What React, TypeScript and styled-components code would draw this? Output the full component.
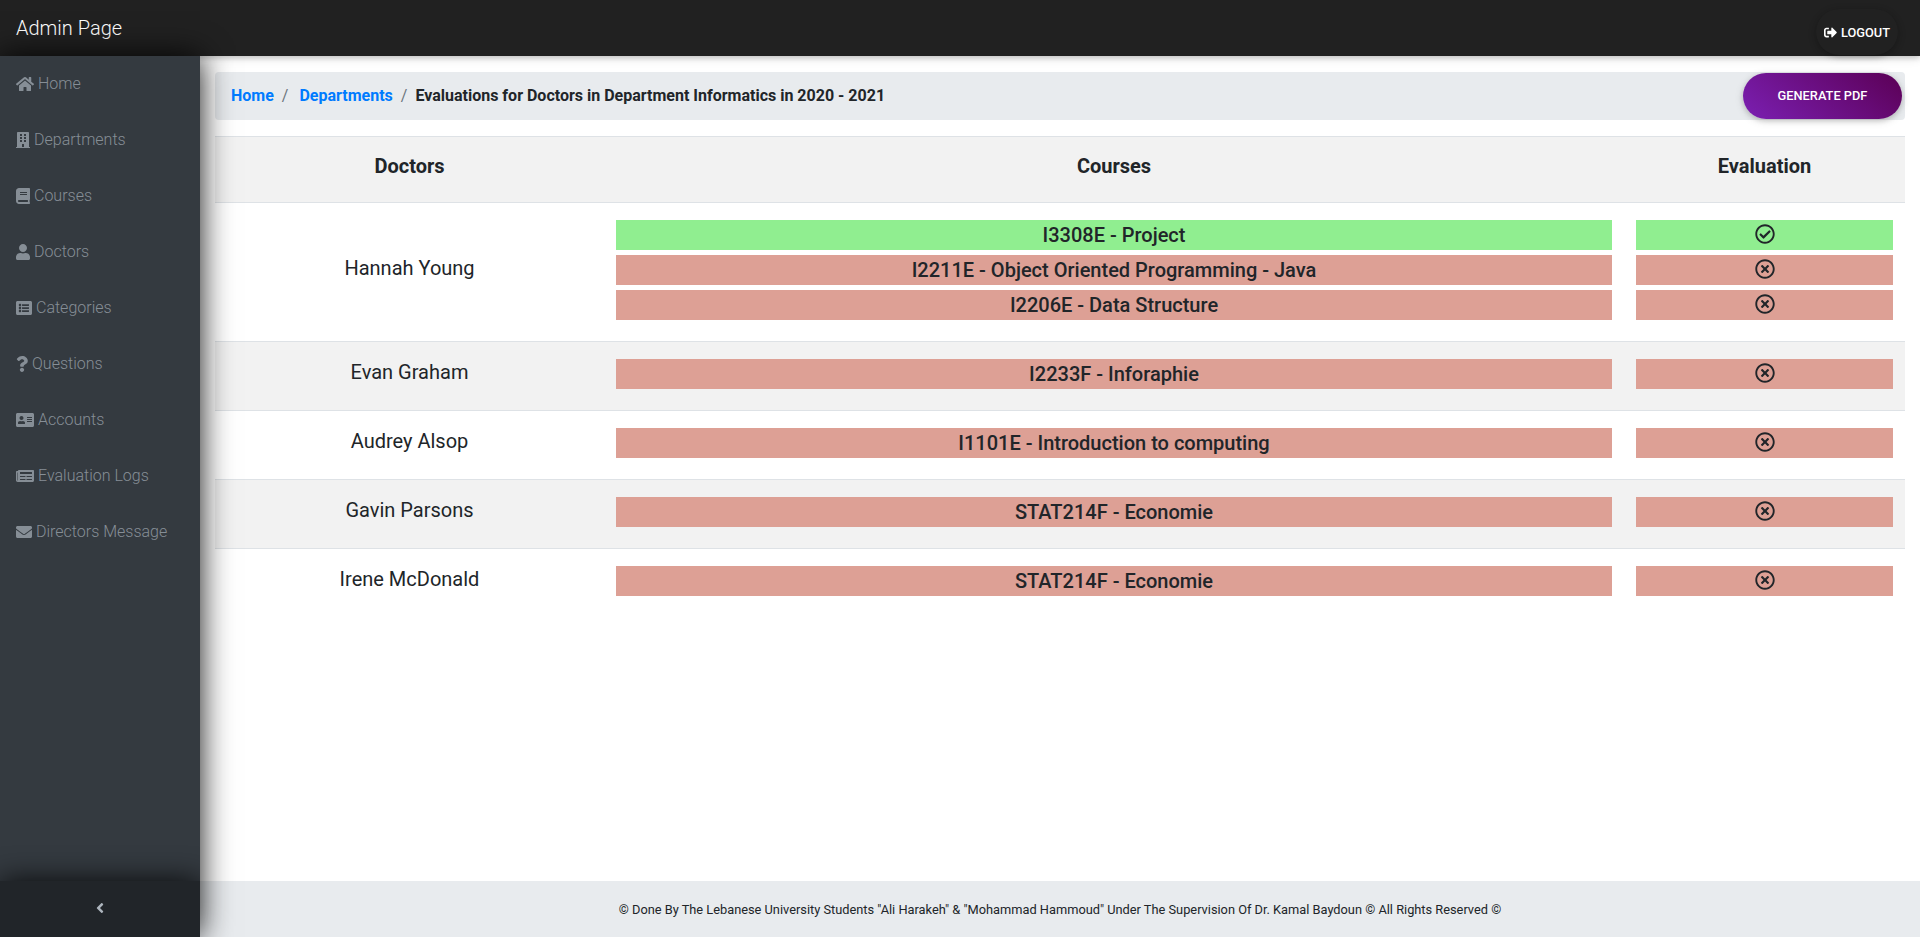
import React from "react";
import styled, { createGlobalStyle } from "styled-components";
import {
  FaHome,
  FaBuilding,
  FaBook,
  FaUser,
  FaListAlt,
  FaQuestion,
  FaAddressCard,
  FaNewspaper,
  FaEnvelope,
  FaAngleLeft,
  FaSignOutAlt,
  FaRegCheckCircle,
  FaRegTimesCircle,
} from "react-icons/fa";
import type { IconType } from "react-icons";

const GlobalStyle = createGlobalStyle`
  *, *::before, *::after { box-sizing: border-box; }
  body {
    margin: 0;
    background: #fff;
    color: #212529;
    font-family: Roboto, sans-serif;
    font-size: 16px;
    font-weight: 300;
    line-height: 1.5;
    overflow: hidden;
  }
`;

const Page = styled.div`
  display: grid;
  grid-template-columns: 200px 1fr;
  grid-template-rows: 56px 1fr 56px;
  height: 100vh;
`;

const TopBar = styled.header`
  grid-column: 1 / -1;
  z-index: 1;
  display: flex;
  justify-content: space-between;
  padding: 0 22px 0 16px;
  background: #212121;
  box-shadow: 0 2px 5px 0 rgba(0, 0, 0, 0.16), 0 2px 10px 0 rgba(0, 0, 0, 0.12);
`;

const Brand = styled.a`
  align-self: center;
  color: #fff;
  font-size: 20px;
`;

const Pill = styled.button`
  display: inline-flex;
  align-items: center;
  justify-content: center;
  padding: 0;
  border: 0;
  border-radius: 160px;
  color: #fff;
  font-family: inherit;
  font-size: 12.8px;
  font-weight: 500;
  line-height: 1.5;
  text-transform: uppercase;
  box-shadow: 0 2px 5px 0 rgba(0, 0, 0, 0.16), 0 2px 10px 0 rgba(0, 0, 0, 0.12);
`;

const LogoutButton = styled(Pill)`
  gap: 4px;
  width: 82px;
  height: 46px;
  margin-top: 9px;
  padding-top: 1px;
  background: #212121;
`;

const PdfButton = styled(Pill)`
  width: 159px;
  height: 46px;
  background: linear-gradient(40deg, #7b1fb2, #5b0055);
`;

const Sidebar = styled.aside`
  grid-row: 2 / 4;
  z-index: 2;
  display: flex;
  flex-direction: column;
  justify-content: space-between;
  overflow: hidden;
  background: #343a40;
  box-shadow: 0 0 30px rgba(0, 0, 0, 0.94);
`;

const Menu = styled.nav`
  display: flex;
  flex-direction: column;
`;

const MenuItem = styled.a`
  display: flex;
  align-items: center;
  gap: 4px;
  height: 56px;
  padding-left: 16px;
  color: #868e96;
`;

const MenuGlyph = styled.span<{ $width: number }>`
  display: inline-flex;
  padding-bottom: 1px;
  svg {
    width: ${(p) => p.$width}px;
    height: 16px;
  }
`;

const Collapse = styled.button`
  display: flex;
  align-items: center;
  justify-content: center;
  height: 56px;
  padding: 0 0 2px;
  border: 0;
  background: #212529;
  color: #adb5bd;
  box-shadow: 0 0 30px rgba(0, 0, 0, 0.85);
`;

const Main = styled.main`
  padding: 16px 15px;
`;

const Breadcrumb = styled.div`
  display: flex;
  align-items: center;
  justify-content: space-between;
  height: 48px;
  margin-bottom: 16px;
  padding: 0 3px 0 16px;
  border-radius: 4px;
  background: #e8ebee;
`;

const Trail = styled.div`
  display: flex;
  font-weight: 700;
`;

const Crumb = styled.a`
  color: #007bff;
`;

const Slash = styled.span<{ $after: number }>`
  padding: 0 ${(p) => p.$after}px 0 8px;
  color: #6c757d;
  font-weight: 400;
`;

const Table = styled.div`
  display: flex;
  flex-direction: column;
`;

const Row = styled.div<{ $striped?: boolean }>`
  display: grid;
  grid-template-columns: 389px 1020px 281px;
  border-top: 1px solid #dee2e6;
  background: ${(p) => (p.$striped ? "#f2f2f2" : "#fff")};
`;

const HeadCell = styled.div`
  padding: 17px 12px 24px;
  font-size: 20px;
  font-weight: 700;
  line-height: 24px;
  text-align: center;
`;

const NameCell = styled.div`
  align-self: center;
  padding-bottom: 8px;
  font-size: 20px;
  font-weight: 400;
  line-height: 24px;
  text-align: center;
`;

const Stack = styled.div`
  display: flex;
  flex-direction: column;
  gap: 5px;
  padding: 17px 12px 21px;
`;

const Bar = styled.div<{ $done: boolean }>`
  display: flex;
  align-items: center;
  justify-content: center;
  height: 30px;
  background: ${(p) => (p.$done ? "#90ee90" : "#dda095")};
  font-size: 20px;
  font-weight: 500;

  svg {
    margin-bottom: 2px;
  }
`;

const Footer = styled.footer`
  display: flex;
  align-items: center;
  justify-content: center;
  padding-top: 2px;
  background: #e8ebee;
  font-size: 12.8px;
  font-weight: 400;
`;

const menu: { icon: IconType; width: number; label: string }[] = [
  { icon: FaHome, width: 18, label: "Home" },
  { icon: FaBuilding, width: 14, label: "Departments" },
  { icon: FaBook, width: 14, label: "Courses" },
  { icon: FaUser, width: 14, label: "Doctors" },
  { icon: FaListAlt, width: 16, label: "Categories" },
  { icon: FaQuestion, width: 12, label: "Questions" },
  { icon: FaAddressCard, width: 18, label: "Accounts" },
  { icon: FaNewspaper, width: 18, label: "Evaluation Logs" },
  { icon: FaEnvelope, width: 16, label: "Directors Message" },
];

interface Course {
  title: string;
  done: boolean;
}

const doctors: { name: string; courses: Course[] }[] = [
  {
    name: "Hannah Young",
    courses: [
      { title: "I3308E - Project", done: true },
      { title: "I2211E - Object Oriented Programming - Java", done: false },
      { title: "I2206E - Data Structure", done: false },
    ],
  },
  { name: "Evan Graham", courses: [{ title: "I2233F - Inforaphie", done: false }] },
  { name: "Audrey Alsop", courses: [{ title: "I1101E - Introduction to computing", done: false }] },
  { name: "Gavin Parsons", courses: [{ title: "STAT214F - Economie", done: false }] },
  { name: "Irene McDonald", courses: [{ title: "STAT214F - Economie", done: false }] },
];

export default function App() {
  return (
    <>
      <GlobalStyle />
      <Page>
        <TopBar>
          <Brand>Admin Page</Brand>
          <LogoutButton>
            <FaSignOutAlt size={13} />
            Logout
          </LogoutButton>
        </TopBar>
        <Sidebar>
          <Menu>
            {menu.map(({ icon: Icon, width, label }) => (
              <MenuItem key={label}>
                <MenuGlyph $width={width}>
                  <Icon />
                </MenuGlyph>
                {label}
              </MenuItem>
            ))}
          </Menu>
          <Collapse aria-label="Collapse menu">
            <FaAngleLeft size={16} />
          </Collapse>
        </Sidebar>
        <Main>
          <Breadcrumb>
            <Trail>
              <Crumb>Home</Crumb>
              <Slash $after={11}>/</Slash>
              <Crumb>Departments</Crumb>
              <Slash $after={8}>/</Slash>
              <span>Evaluations for Doctors in Department Informatics in 2020 - 2021</span>
            </Trail>
            <PdfButton>Generate PDF</PdfButton>
          </Breadcrumb>
          <Table>
            <Row $striped>
              <HeadCell>Doctors</HeadCell>
              <HeadCell>Courses</HeadCell>
              <HeadCell>Evaluation</HeadCell>
            </Row>
            {doctors.map((doctor, i) => (
              <Row key={doctor.name} $striped={i % 2 === 1}>
                <NameCell>{doctor.name}</NameCell>
                <Stack>
                  {doctor.courses.map((c) => (
                    <Bar key={c.title} $done={c.done}>
                      {c.title}
                    </Bar>
                  ))}
                </Stack>
                <Stack>
                  {doctor.courses.map((c) => (
                    <Bar key={c.title} $done={c.done}>
                      {c.done ? <FaRegCheckCircle size={20} /> : <FaRegTimesCircle size={20} />}
                    </Bar>
                  ))}
                </Stack>
              </Row>
            ))}
          </Table>
        </Main>
        <Footer>
          © Done By The Lebanese University Students "Ali Harakeh" &amp; "Mohammad Hammoud" Under The
          Supervision Of Dr. Kamal Baydoun © All Rights Reserved ©
        </Footer>
      </Page>
    </>
  );
}
